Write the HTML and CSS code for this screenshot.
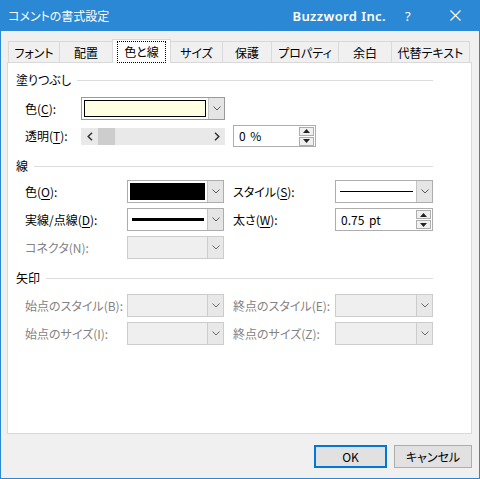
FILE: index.html
```html
<!DOCTYPE html>
<html lang="ja">
<head>
<meta charset="utf-8">
<title>コメントの書式設定</title>
<link rel="stylesheet" href="styles.css">
</head>
<body>
<div class="window">
  <div class="titlebar">
    <span class="title">コメントの書式設定</span>
    <span class="brand">Buzzword Inc.</span>
    <span class="help">?</span>
    <span class="close"><svg width="11" height="11" viewBox="0 0 11 11"><path d="M0.5 0.5 L10.5 10.5 M10.5 0.5 L0.5 10.5" stroke="#fff" stroke-width="1.1" fill="none"/></svg></span>
  </div>
  <div class="body">
    <div class="tabs">
      <div class="tab w52">フォント</div>
      <div class="tab w53">配置</div>
      <div class="tab active w58"><span class="focus">色と線</span></div>
      <div class="tab w52">サイズ</div>
      <div class="tab w49">保護</div>
      <div class="tab w67">プロパティ</div>
      <div class="tab w53">余白</div>
      <div class="tab w78">代替テキスト</div>
    </div>
    <div class="panel">
      <div class="section-head"><span>塗りつぶし</span></div>
      <div class="fill-rows">
        <div class="row">
          <label class="lbl fill-lbl">色(<u>C</u>):</label>
          <div class="combo focused w144">
            <div class="field"><div class="swatch yellow"></div></div>
            <div class="drop"><svg width="8" height="5" viewBox="0 0 8 5"><path d="M0.5 0.5 L4 4 L7.5 0.5" stroke="#5a5a5a" fill="none"/></svg></div>
          </div>
        </div>
        <div class="row row2">
          <label class="lbl fill-lbl">透明(<u>T</u>):</label>
          <div class="scrollbar">
            <span class="sb-arrow"><svg width="6" height="9" viewBox="0 0 6 9"><path d="M5 0.8 L1.2 4.5 L5 8.2" stroke="#333" stroke-width="1.5" fill="none"/></svg></span>
            <span class="sb-thumb"></span>
            <span class="sb-track"></span>
            <span class="sb-arrow"><svg width="6" height="9" viewBox="0 0 6 9"><path d="M1 0.8 L4.8 4.5 L1 8.2" stroke="#333" stroke-width="1.5" fill="none"/></svg></span>
          </div>
          <div class="spin w83">
            <span class="spin-text">0 %</span>
            <span class="spin-btns">
              <span class="spin-btn"><svg width="7" height="4" viewBox="0 0 7 4"><path d="M0 4 L3.5 0 L7 4 Z" fill="#222"/></svg></span>
              <span class="spin-btn"><svg width="7" height="4" viewBox="0 0 7 4"><path d="M0 0 L3.5 4 L7 0 Z" fill="#222"/></svg></span>
            </span>
          </div>
        </div>
      </div>

      <div class="section-head sec2"><span>線</span></div>
      <div class="grid-rows">
        <label class="lbl">色(<u>O</u>):</label>
        <div class="combo w97">
          <div class="field"><div class="swatch black"></div></div>
          <div class="drop"><svg width="8" height="5" viewBox="0 0 8 5"><path d="M0.5 0.5 L4 4 L7.5 0.5" stroke="#5a5a5a" fill="none"/></svg></div>
        </div>
        <label class="lbl">スタイル(<u>S</u>):</label>
        <div class="combo w98">
          <div class="field line-field"><div class="line thin"></div></div>
          <div class="drop"><svg width="8" height="5" viewBox="0 0 8 5"><path d="M0.5 0.5 L4 4 L7.5 0.5" stroke="#5a5a5a" fill="none"/></svg></div>
        </div>

        <label class="lbl">実線/点線(<u>D</u>):</label>
        <div class="combo w97">
          <div class="field line-field"><div class="line thick"></div></div>
          <div class="drop"><svg width="8" height="5" viewBox="0 0 8 5"><path d="M0.5 0.5 L4 4 L7.5 0.5" stroke="#5a5a5a" fill="none"/></svg></div>
        </div>
        <label class="lbl">太さ(<u>W</u>):</label>
        <div class="spin w98">
          <span class="spin-text">0.75 pt</span>
          <span class="spin-btns">
            <span class="spin-btn"><svg width="7" height="4" viewBox="0 0 7 4"><path d="M0 4 L3.5 0 L7 4 Z" fill="#222"/></svg></span>
            <span class="spin-btn"><svg width="7" height="4" viewBox="0 0 7 4"><path d="M0 0 L3.5 4 L7 0 Z" fill="#222"/></svg></span>
          </span>
        </div>

        <label class="lbl disabled">コネクタ(N):</label>
        <div class="combo disabled w97">
          <div class="field"></div>
          <div class="drop"><svg width="8" height="5" viewBox="0 0 8 5"><path d="M0.5 0.5 L4 4 L7.5 0.5" stroke="#6a6a6a" fill="none"/></svg></div>
        </div>
      </div>

      <div class="section-head sec3"><span>矢印</span></div>
      <div class="grid-rows arrows">
        <label class="lbl disabled">始点のスタイル(B):</label>
        <div class="combo disabled w97">
          <div class="field"></div>
          <div class="drop"><svg width="8" height="5" viewBox="0 0 8 5"><path d="M0.5 0.5 L4 4 L7.5 0.5" stroke="#6a6a6a" fill="none"/></svg></div>
        </div>
        <label class="lbl disabled">終点のスタイル(E):</label>
        <div class="combo disabled w98">
          <div class="field"></div>
          <div class="drop"><svg width="8" height="5" viewBox="0 0 8 5"><path d="M0.5 0.5 L4 4 L7.5 0.5" stroke="#6a6a6a" fill="none"/></svg></div>
        </div>

        <label class="lbl disabled">始点のサイズ(I):</label>
        <div class="combo disabled w97">
          <div class="field"></div>
          <div class="drop"><svg width="8" height="5" viewBox="0 0 8 5"><path d="M0.5 0.5 L4 4 L7.5 0.5" stroke="#6a6a6a" fill="none"/></svg></div>
        </div>
        <label class="lbl disabled">終点のサイズ(Z):</label>
        <div class="combo disabled w98">
          <div class="field"></div>
          <div class="drop"><svg width="8" height="5" viewBox="0 0 8 5"><path d="M0.5 0.5 L4 4 L7.5 0.5" stroke="#6a6a6a" fill="none"/></svg></div>
        </div>
      </div>
    </div>
    <div class="buttons">
      <button class="btn default">OK</button>
      <button class="btn cancel">キャンセル</button>
    </div>
  </div>
</div>
</body>
</html>
```

FILE: styles.css
```css
* { box-sizing: border-box; }
html, body { margin: 0; padding: 0; }
body {
  font-family: "Noto Sans CJK JP", "Noto Sans", sans-serif;
  font-size: 12px;
  font-feature-settings: "palt";
  color: #000;
  background: #f0f0f0;
}
.window {
  width: 480px;
  height: 479px;
  background: #f0f0f0;
  border: 1px solid #2b88d4;
  border-top: none;
  overflow: hidden;
}
.titlebar {
  height: 31px;
  margin: 0 -1px;
  background: #2b88d4;
  color: #fff;
  display: flex;
  align-items: center;
  padding-left: 8px;
}
.title { font-size: 12px; line-height: 16px; }
.brand {
  margin-left: auto;
  font-family: "Noto Sans", "Open Sans", sans-serif;
  font-weight: 600;
  font-size: 13px;
  letter-spacing: 0.4px;
}
.help {
  margin-left: 19px;
  font-family: "Noto Sans", sans-serif;
  font-size: 13px;
  width: 12px;
}
.close {
  margin-left: 33px;
  margin-right: 19px;
  display: flex;
}
.body {
  padding: 8px 7px 0 6px;
}
.tabs {
  display: flex;
  align-items: flex-end;
  height: 23px;
  padding-left: 1px;
  position: relative;
  z-index: 1;
}
.tab {
  height: 21px;
  border: 1px solid #d9d9d9;
  border-bottom: none;
  border-left: none;
  background: #f0f0f0;
  display: flex;
  align-items: center;
  justify-content: center;
  line-height: 14px;
  padding-top: 2px;
}
.tab:first-child { border-left: 1px solid #d9d9d9; }
.tab.active {
  height: 24px;
  margin-bottom: -1px;
  background: #fff;
  border-left: 1px solid #d9d9d9;
  margin-left: -1px;
  padding-top: 0;
}
.focus {
  outline: 1px dotted #000;
  padding: 2px 6px;
  line-height: 16px;
}
.w49 { width: 49px; } .w52 { width: 52px; } .w53 { width: 53px; }
.w58 { width: 59px; } .w67 { width: 67px; } .w78 { width: 78px; }

.panel {
  height: 372px;
  background: #fff;
  border: 1px solid #d9d9d9;
  padding: 9px 38px 0 8px;
}
.section-head {
  display: flex;
  align-items: center;
  height: 16px;
  line-height: 16px;
}
.section-head::after {
  content: "";
  flex: 1;
  border-top: 1px solid #dcdcdc;
  margin-left: 6px;
  margin-top: 1px;
}
.sec2 { margin-top: 11px; }
.sec3 { margin-top: 11px; }

.fill-rows { margin-top: 9px; padding-left: 9px; }
.row { display: flex; align-items: center; height: 23px; }
.row2 { margin-top: 5px; height: 22px; }
.lbl { line-height: 16px; white-space: nowrap; }
.lbl u { text-decoration-thickness: 1px; text-underline-offset: 2px; }
.fill-lbl { width: 56px; }
.lbl.disabled { color: #838383; }

.combo {
  height: 23px;
  border: 1px solid #adadad;
  background: #fff;
  display: flex;
}
.combo.focused { border-color: #9a9a9a; }
.w144 { width: 144px; }
.w97 { width: 97px; }
.w98 { width: 98px; }
.w83 { width: 83px; }
.field { flex: 1; padding: 2px; display: flex; }
.drop {
  width: 16px;
  background: #e5e5e5;
  border-left: 1px solid #c4c4c4;
  display: flex;
  align-items: center;
  justify-content: center;
}
.swatch { flex: 1; border: 1px solid #000; }
.yellow { background: #ffffe1; }
.black { background: #000; }
.line-field { align-items: center; padding: 2px 3px 2px 4px; }
.line { flex: 1; background: #000; }
.line.thin { height: 1px; }
.line.thick { height: 3px; }
.combo.disabled { background: #efefef; border-color: #cccccc; }
.combo.disabled .drop { background: #e8e8e8; border-left-color: #cccccc; }

.scrollbar {
  width: 144px;
  height: 17px;
  background: #e9e9e9;
  display: flex;
  align-items: stretch;
}
.sb-arrow {
  width: 17px;
  display: flex;
  align-items: center;
  justify-content: center;
}
.sb-thumb { width: 17px; background: #cdcdcd; }
.sb-track { flex: 1; }

.spin {
  margin-left: 8px;
  height: 22px;
  border: 1px solid #adadad;
  background: #fff;
  display: flex;
  align-items: center;
}
.grid-rows .spin { margin-left: 0; height: 23px; }
.spin-text { flex: 1; padding-left: 5px; line-height: 16px; word-spacing: 2px; }
.spin-btns {
  display: flex;
  flex-direction: column;
  gap: 1px;
  margin-right: 1px;
}
.spin-btn {
  width: 15px;
  height: 9px;
  border: 1px solid #adadad;
  background: #f0f0f0;
  display: flex;
  align-items: center;
  justify-content: center;
}

.grid-rows {
  margin-top: 6px;
  padding-left: 9px;
  display: grid;
  grid-template-columns: 102px 106px 102px 98px;
  grid-auto-rows: 23px;
  row-gap: 5px;
  align-items: center;
}
.grid-rows.arrows { margin-top: 8px; }

.buttons {
  display: flex;
  justify-content: flex-end;
  gap: 7px;
  margin-top: 11px;
}
.btn {
  font-family: "Noto Sans CJK JP", "Noto Sans", sans-serif;
  font-feature-settings: "palt";
  font-size: 12px;
  height: 23px;
  background: #e1e1e1;
  border: 1px solid #adadad;
  padding: 0;
  color: #000;
  line-height: 16px;
}
.btn.default { width: 73px; border: 2px solid #0078d7; }
.btn.cancel { width: 78px; }
```
